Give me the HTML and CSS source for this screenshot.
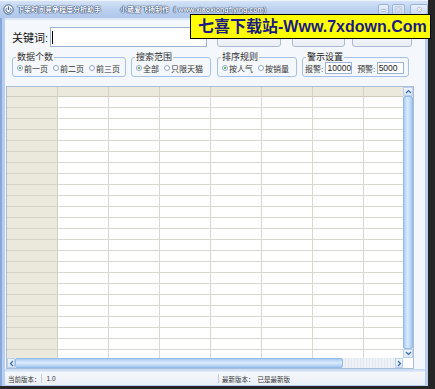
FILE: index.html
```html
<!DOCTYPE html>
<html lang="zh-CN">
<head>
  <meta charset="UTF-8">
  <meta name="viewport" content="width=device-width, initial-scale=1.0">
  <title>下架时间竞争程度分析助手</title>
  <link rel="stylesheet" href="styles.css">
</head>
<body>
  <div class="window">
    <div class="titlebar">
      <svg class="app-icon" width="11" height="11" viewBox="0 0 11 11">
        <circle cx="5.5" cy="5.5" r="4.7" fill="#f4f8fd" stroke="#3f5f8e" stroke-width="1"/>
        <path d="M5.5 2.6v3.4" stroke="#3f5f8e" stroke-width="1.2" fill="none"/>
        <path d="M3.6 4.2a2.6 2.6 0 1 0 3.8 0" stroke="#3f5f8e" stroke-width="0.9" fill="none"/>
      </svg>
      <span class="title">下架时间竞争程度分析助手</span>
      <span class="credit">小崴爱飞扬制作（ www.xiaoxiongflying.com)</span>
      <div class="win-buttons">
        <span class="wbtn wmin">
          <svg width="9" height="9" viewBox="0 0 9 9">
            <path d="M2.5 5.5h4" stroke="#8ea6cb" stroke-width="2.4"/>
            <path d="M2.5 5.5h4" stroke="#fff" stroke-width="1.1"/>
          </svg>
        </span>
        <span class="wbtn wmax">
          <svg width="11" height="9" viewBox="0 0 11 9">
            <rect x="3" y="2" width="5" height="5" fill="none" stroke="#8ea6cb" stroke-width="2.2"/>
            <rect x="3" y="2" width="5" height="5" fill="none" stroke="#fff" stroke-width="1"/>
          </svg>
        </span>
        <span class="wbtn wclose">
          <svg width="11" height="9" viewBox="0 0 11 9">
            <path d="M3.5 2.5l4 4M7.5 2.5l-4 4" stroke="#8ea6cb" stroke-width="2.4"/>
            <path d="M3.5 2.5l4 4M7.5 2.5l-4 4" stroke="#fff" stroke-width="1.1"/>
          </svg>
        </span>
      </div>
    </div>

    <div class="frame">
      <div class="client">
        <div class="search-row">
          <label class="kw-label">关键词:</label>
          <div class="kw-input"><span class="caret"></span></div>
          <button class="btn btn-start"></button>
          <button class="btn btn-stop"></button>
          <button class="btn btn-export"></button>
        </div>

        <div class="groups">
          <fieldset class="group g-count">
            <legend>数据个数</legend>
            <div class="opts">
              <span class="opt"><i class="radio on"></i>前一页</span>
              <span class="opt"><i class="radio"></i>前二页</span>
              <span class="opt"><i class="radio"></i>前三页</span>
            </div>
          </fieldset>
          <fieldset class="group g-range">
            <legend>搜索范围</legend>
            <div class="opts">
              <span class="opt"><i class="radio on"></i>全部</span>
              <span class="opt"><i class="radio"></i>只限天猫</span>
            </div>
          </fieldset>
          <fieldset class="group g-sort">
            <legend>排序规则</legend>
            <div class="opts">
              <span class="opt"><i class="radio on"></i>按人气</span>
              <span class="opt"><i class="radio"></i>按销量</span>
            </div>
          </fieldset>
          <fieldset class="group g-alert">
            <legend>警示设置</legend>
            <div class="opts alert-opts">
              <span class="field-label">报警:</span>
              <span class="num-input n1">10000</span>
              <span class="field-label l2">预警:</span>
              <span class="num-input n2">5000</span>
            </div>
          </fieldset>
        </div>

        <div class="panel">
          <div class="table">
            <div class="head-corner"></div>
            <div class="col-heads"></div>
            <div class="row-heads"></div>
            <div class="cells"></div>
          </div>
          <div class="vscroll">
            <span class="sarrow">
              <svg width="7" height="5" viewBox="0 0 7 5"><path d="M1 4l2.5-2.5L6 4" stroke="#3d6aa8" stroke-width="1.2" fill="none"/></svg>
            </span>
            <span class="vthumb"></span>
            <span class="sarrow">
              <svg width="7" height="5" viewBox="0 0 7 5"><path d="M1 1l2.5 2.5L6 1" stroke="#3d6aa8" stroke-width="1.2" fill="none"/></svg>
            </span>
          </div>
          <div class="hscroll">
            <span class="sarrow">
              <svg width="5" height="7" viewBox="0 0 5 7"><path d="M4 1L1.5 3.5L4 6" stroke="#3d6aa8" stroke-width="1.2" fill="none"/></svg>
            </span>
            <span class="hthumb"></span>
            <span class="htrack"></span>
            <span class="sarrow">
              <svg width="5" height="7" viewBox="0 0 5 7"><path d="M1 1l2.5 2.5L1 6" stroke="#3d6aa8" stroke-width="1.2" fill="none"/></svg>
            </span>
          </div>
          <div class="scroll-corner"></div>
        </div>

        <div class="band"></div>

        <div class="statusbar">
          <div class="status-cell first">
            <span class="s-label">当前版本：</span>
            <span class="s-sep"></span>
            <span class="s-val">1.0</span>
          </div>
          <span class="s-sep"></span>
          <div class="status-cell">
            <span class="s-label">最新版本：</span>
            <span class="s-val">已是最新版</span>
          </div>
        </div>
      </div>
    </div>

    <div class="watermark">七喜下载站-Www.7xdown.Com</div>
  </div>
</body>
</html>
```

FILE: styles.css
```css
body {
  margin: 0;
  width: 435px;
  height: 389px;
  overflow: hidden;
  background-color: #262626;
  font-family: "Liberation Sans", "Noto Sans CJK SC", sans-serif;
  color: #333;
}

.window {
  position: relative;
  width: 428px;
  height: 386px;
  display: flex;
  flex-direction: column;
}

/* title bar */
.titlebar {
  height: 18px;
  flex: none;
  display: flex;
  align-items: center;
  background: linear-gradient(#d6e4f7, #bbd0ef 55%, #aec6ea);
  box-shadow: inset 0 1px 0 #eef4fc;
}

.app-icon {
  margin-left: 3px;
  flex: none;
}

.title,
.credit {
  font-size: 7px;
  font-weight: bold;
  color: #fff;
  white-space: nowrap;
  text-shadow: 0 0 1px #1d3563, 0 0 1px #1d3563, 0 0 1px #1d3563;
}

.title {
  margin-left: 3px;
}

.credit {
  margin-left: 19px;
}

.win-buttons {
  margin-left: auto;
  display: flex;
  align-items: center;
}

.wbtn {
  height: 11px;
  box-sizing: border-box;
  border: 1px solid #98b2da;
  border-radius: 2px;
  background: linear-gradient(#eaf1fb, #c9daf2);
  display: flex;
  align-items: center;
  justify-content: center;
}

.wmin { width: 11px; }
.wmax { width: 13px; margin-left: 3px; }
.wclose { width: 18px; margin-left: 5px; }

/* frame + client */
.frame {
  flex: 1;
  display: flex;
  border-left: 2px solid #86a8dc;
  padding: 0 3px 1px 3px;
  background-color: #b8cfef;
}

.client {
  flex: 1;
  display: flex;
  flex-direction: column;
  background-color: #f4f7fb;
  border-top: 2px solid #dce7f6;
  padding-top: 7px;
}

.search-row {
  height: 20px;
  display: flex;
  align-items: center;
  padding-left: 7px;
}

.kw-label {
  width: 38px;
  font-size: 11px;
  color: #111;
}

.kw-input {
  width: 157px;
  height: 20px;
  box-sizing: border-box;
  border: 1px solid #9fb4d3;
  background-color: #fff;
  display: flex;
  align-items: center;
}

.caret {
  width: 1px;
  height: 13px;
  background-color: #000;
  margin-left: 1px;
}

.btn {
  height: 19px;
  box-sizing: border-box;
  border: 1px solid #a9bbd4;
  border-radius: 3px;
  background: linear-gradient(#fdfdfe, #e9eef5);
  padding: 0;
}

.btn-start { width: 64px; margin-left: 10px; }
.btn-stop { width: 53px; margin-left: 11px; }
.btn-export { width: 60px; margin-left: 7px; }

/* option groups */
.groups {
  display: flex;
  margin-top: 5px;
  padding-left: 7px;
}

.group {
  box-sizing: border-box;
  min-width: 0;
  margin: 0;
  padding: 0 4px 2px;
  border: 1px solid #a6c1e7;
  border-radius: 3px;
}

.group legend {
  font-size: 9px;
  line-height: 10px;
  color: #333;
  padding: 0 1px;
  margin-left: -1px;
}

.g-count { width: 114px; margin-right: 5px; }
.g-range { width: 80px; margin-right: 6px; }
.g-sort { width: 80px; margin-right: 5px; }
.g-alert { width: 107px; padding-left: 2px; }

.g-alert legend {
  color: #222;
  margin-left: 1px;
}

.opts {
  height: 12px;
  display: flex;
  align-items: center;
  gap: 5px;
}

.opt {
  display: flex;
  align-items: center;
  gap: 1px;
  font-size: 8px;
  color: #333;
  white-space: nowrap;
}

.radio {
  width: 6px;
  height: 6px;
  box-sizing: border-box;
  border: 1px solid #8ea4c4;
  border-radius: 50%;
  background: #fff;
  display: flex;
  align-items: center;
  justify-content: center;
}

.radio.on::after {
  content: "";
  width: 2px;
  height: 2px;
  border-radius: 50%;
  background-color: #2ea12e;
}

.alert-opts {
  gap: 0;
}

.field-label {
  font-size: 8px;
  color: #333;
  width: 21px;
  white-space: nowrap;
}

.field-label.l2 {
  margin-left: 5px;
  width: 20px;
}

.num-input {
  height: 12px;
  box-sizing: border-box;
  border: 1px solid #9fb4d3;
  background-color: #fff;
  font-size: 8.5px;
  line-height: 10px;
  padding-left: 1px;
  color: #222;
}

.n1 { width: 27px; }
.n2 { width: 28px; }

/* data grid */
.panel {
  margin: 9px 11px 0 1px;
  border: 1px solid #aabed9;
  display: grid;
  grid-template-columns: 1fr 10px;
  grid-template-rows: 271px 10px;
}

.table {
  display: grid;
  grid-template-columns: 51px 1fr;
  grid-template-rows: 10px 1fr;
  overflow: hidden;
  background-color: #fff;
}

.head-corner {
  background-color: #ebe8dc;
  border-right: 1px solid #d4d0c4;
  border-bottom: 1px solid #cfcbbd;
}

.col-heads {
  background: repeating-linear-gradient(to right, #ebe8dc 0 50px, #d5d1c5 50px 51px);
  border-bottom: 1px solid #cfcbbd;
}

.row-heads {
  background: repeating-linear-gradient(to bottom, #ebe8dc 0 10px, #d7d3c7 10px 11px);
  border-right: 1px solid #d4d0c4;
}

.cells {
  background-color: #fff;
  background-image:
    repeating-linear-gradient(to right, transparent 0 50px, #d9d7d1 50px 51px),
    repeating-linear-gradient(to bottom, transparent 0 10px, #d9d7d1 10px 11px);
}

.sarrow {
  flex: none;
  display: flex;
  align-items: center;
  justify-content: center;
  background: linear-gradient(#eef4fc, #d8e6f7);
  box-sizing: border-box;
  border: 1px solid #b9d0ee;
}

.vscroll {
  display: flex;
  flex-direction: column;
  background-color: #eef3f9;
}

.vscroll .sarrow {
  height: 9px;
}

.vthumb {
  flex: 1;
  box-sizing: border-box;
  border: 1px solid #94bbe8;
  border-radius: 2px;
  background: linear-gradient(to right, #a9cdf2, #dbeafb 45%, #c6ddf7 70%, #a3c7ef);
}

.hscroll {
  display: flex;
  background-color: #eef2f7;
}

.hscroll .sarrow {
  width: 8px;
}

.hthumb {
  width: 328px;
  box-sizing: border-box;
  border: 1px solid #94bbe8;
  border-radius: 2px;
  background: linear-gradient(#a9cdf2, #dbeafb 45%, #c6ddf7 70%, #a3c7ef);
}

.htrack {
  flex: 1;
  background: repeating-linear-gradient(to right, #eef2f7 0 2px, #e2e8f0 2px 3px);
}

.scroll-corner {
  background-color: #fff;
}

/* status bar */
.band {
  height: 3px;
  background: linear-gradient(#c3d7f1, #e4edf9);
}

.statusbar {
  height: 13px;
  display: flex;
  align-items: center;
  background: linear-gradient(#f5f7fb, #eaeff6);
  font-size: 6.5px;
  color: #333;
}

.status-cell {
  display: flex;
  align-items: center;
  white-space: nowrap;
}

.status-cell.first {
  width: 210px;
  padding-left: 3px;
}

.s-sep {
  width: 1px;
  height: 9px;
  background-color: #c5ccd6;
  margin: 0 2px 0 0;
}

.status-cell + .s-sep {
  margin: 0 3px 0 0;
}

.status-cell .s-val {
  margin-left: 3px;
}

/* download-site watermark over the window */
.watermark {
  position: absolute;
  left: 190px;
  top: 14px;
  width: 241px;
  height: 25px;
  box-sizing: border-box;
  border: 1px solid #000;
  background-color: #ffff00;
  color: #1b1b86;
  font-family: "Liberation Sans", "Noto Sans CJK SC", sans-serif;
  font-size: 16px;
  font-weight: bold;
  line-height: 23px;
  padding-left: 7px;
  white-space: nowrap;
}
```
